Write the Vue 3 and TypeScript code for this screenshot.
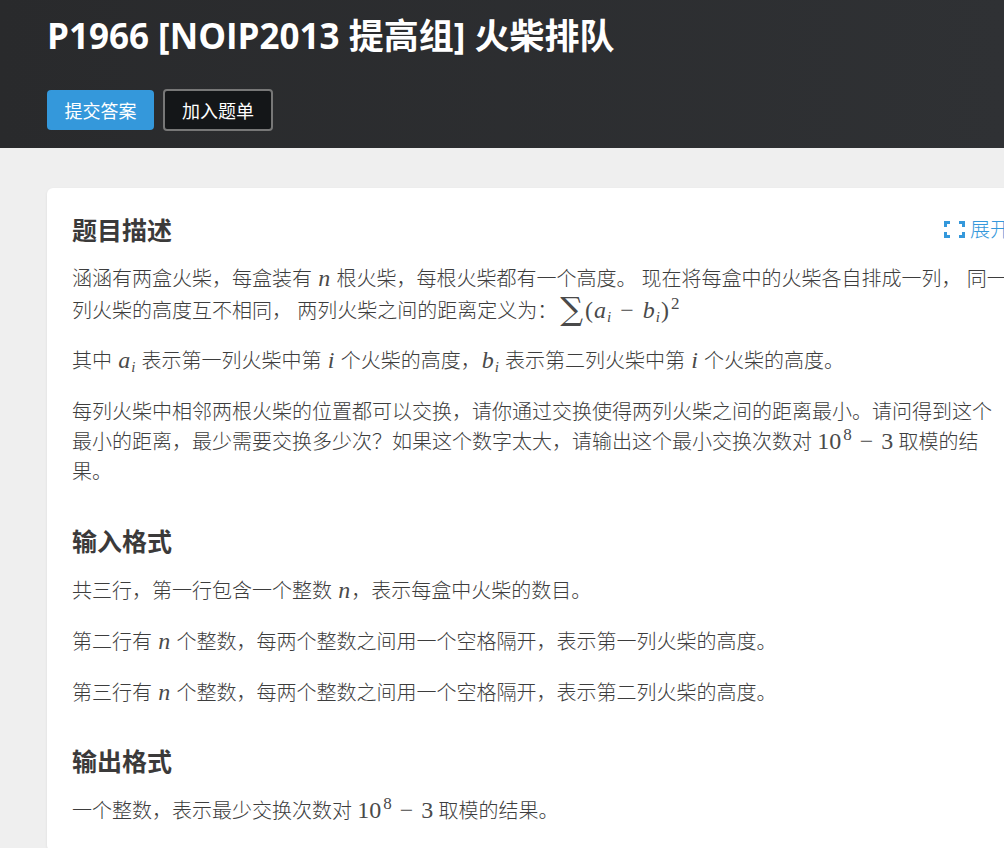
<script setup lang="ts">
const buttons = [
  { label: '提交答案', kind: 'primary' },
  { label: '加入题单', kind: 'dark' }
]
</script>

<template>
  <div class="page" lang="zh-CN">
    <header class="hero">
      <h1 class="title">P1966 [NOIP2013 提高组] 火柴排队</h1>
      <div class="actions">
        <button v-for="btn in buttons" :key="btn.label" class="btn" :class="btn.kind">{{ btn.label }}</button>
      </div>
    </header>

    <main class="card">
      <div class="head-row">
        <h2 class="heading">题目描述</h2>
        <a class="expand">
          <svg class="expand-icon" width="21" height="17" viewBox="0 0 21 17" fill="none" stroke="#3498db" stroke-width="3">
            <path d="M6 1.5H1.5V6" />
            <path d="M15 1.5H19.5V6" />
            <path d="M6 15.5H1.5V11" />
            <path d="M15 15.5H19.5V11" />
          </svg>
          <span>展开</span>
        </a>
      </div>
      <p class="para">
        涵涵有两盒火柴，每盒装有 <span class="m">n</span> 根火柴，每根火柴都有一个高度。 现在将每盒中的火柴各自排成一列， 同一列火柴的高度互不相同， 两列火柴之间的距离定义为：<span class="formula"><span class="sum">∑</span><span class="r">(</span><span class="m">a</span><sub class="m">i</sub><span class="r minus">−</span><span class="m">b</span><sub class="m">i</sub><span class="r">)</span><sup class="r">2</sup></span>
      </p>
      <p class="para tight">
        其中 <span class="m">a</span><sub class="m">i</sub> 表示第一列火柴中第 <span class="m">i</span> 个火柴的高度，<span class="m">b</span><sub class="m">i</sub> 表示第二列火柴中第 <span class="m">i</span> 个火柴的高度。
      </p>
      <p class="para">
        每列火柴中相邻两根火柴的位置都可以交换，请你通过交换使得两列火柴之间的距离最小。请问得到这个最小的距离，最少需要交换多少次？如果这个数字太大，请输出这个最小交换次数对
        <span class="r">10</span><sup class="r">8</sup><span class="r minus">−</span><span class="r">3</span> 取模的结果。
      </p>

      <h2 class="heading section">输入格式</h2>
      <p class="para">共三行，第一行包含一个整数 <span class="m">n</span>，表示每盒中火柴的数目。</p>
      <p class="para">第二行有 <span class="m">n</span> 个整数，每两个整数之间用一个空格隔开，表示第一列火柴的高度。</p>
      <p class="para">第三行有 <span class="m">n</span> 个整数，每两个整数之间用一个空格隔开，表示第二列火柴的高度。</p>

      <h2 class="heading section last">输出格式</h2>
      <p class="para">
        一个整数，表示最少交换次数对 <span class="r">10</span><sup class="r">8</sup><span class="r minus">−</span><span class="r">3</span> 取模的结果。
      </p>
    </main>
  </div>
</template>

<style scoped>
.page {
  width: 1004px;
  height: 848px;
  overflow: hidden;
  background: #efefef;
  color: #3d3d3d;
  font-family: "Open Sans", "Noto Sans CJK SC", sans-serif;
}

.hero {
  height: 148px;
  box-sizing: border-box;
  padding: 10px 48px 0 47px;
  background: linear-gradient(90deg, #292a2c, #2f3134);
  color: #fff;
}

.title {
  margin: 0;
  height: 52px;
  font-size: 35px;
  line-height: 52px;
  font-weight: 700;
  white-space: nowrap;
}

.actions {
  display: flex;
  align-items: center;
  gap: 9px;
  margin-top: 27px;
}

.btn {
  box-sizing: border-box;
  padding: 0;
  font-family: inherit;
  font-size: 18px;
  color: #fff;
  border-radius: 4px;
}

.primary {
  width: 107px;
  height: 40px;
  background: #3498db;
  border: 0;
}

.dark {
  width: 110px;
  height: 42px;
  background: #141618;
  border: 2px solid #777;
}

.card {
  box-sizing: border-box;
  width: 989px;
  margin: 40px 0 0 47px;
  padding: 24px 25px 25px 25px;
  background: #fff;
  border-radius: 6px;
  box-shadow: 0 1px 3px rgba(26, 26, 26, 0.08);
}

.head-row {
  display: flex;
  align-items: center;
  justify-content: space-between;
}

.heading {
  margin: 0;
  font-size: 25px;
  line-height: 37px;
  font-weight: 700;
  color: #3b3a3a;
}

.section {
  margin-top: 36px;
}

.last {
  margin-top: 35px;
}

.expand {
  display: flex;
  align-items: center;
  gap: 5px;
  font-size: 20px;
  font-weight: 300;
  line-height: 30px;
  color: #3498db;
  padding-right: 1px;
  margin-top: -2px;
}

.expand-icon {
  display: block;
}

.para {
  margin: 15px 0 0;
  font-size: 20px;
  font-weight: 300;
  line-height: 30px;
}

.section + .para {
  margin-top: 16px;
}

.para + .para {
  margin-top: 21px;
}

.para + .tight {
  margin-top: 20px;
}

.m,
.r,
.sum {
  font-family: "Liberation Serif", "DejaVu Serif", serif;
  font-size: 24px;
  font-weight: 400;
  line-height: 0;
  color: #4a4a4a;
}

.m {
  font-style: italic;
  padding: 0 1px;
}

sub.m {
  font-size: 15px;
  vertical-align: -4px;
  padding: 0 1px 0 0;
}

sup.r {
  font-size: 17px;
  vertical-align: 9px;
  margin-left: 2px;
}

.minus {
  margin: 0 8px;
}

.formula {
  display: inline-block;
  padding-top: 2px;
  margin-left: 3px;
}

.sum {
  font-family: "DejaVu Serif", serif;
  font-size: 32px;
  margin-right: 2px;
  vertical-align: -2px;
}
</style>

<style>
html,
body {
  margin: 0;
  overflow: hidden;
}
</style>
